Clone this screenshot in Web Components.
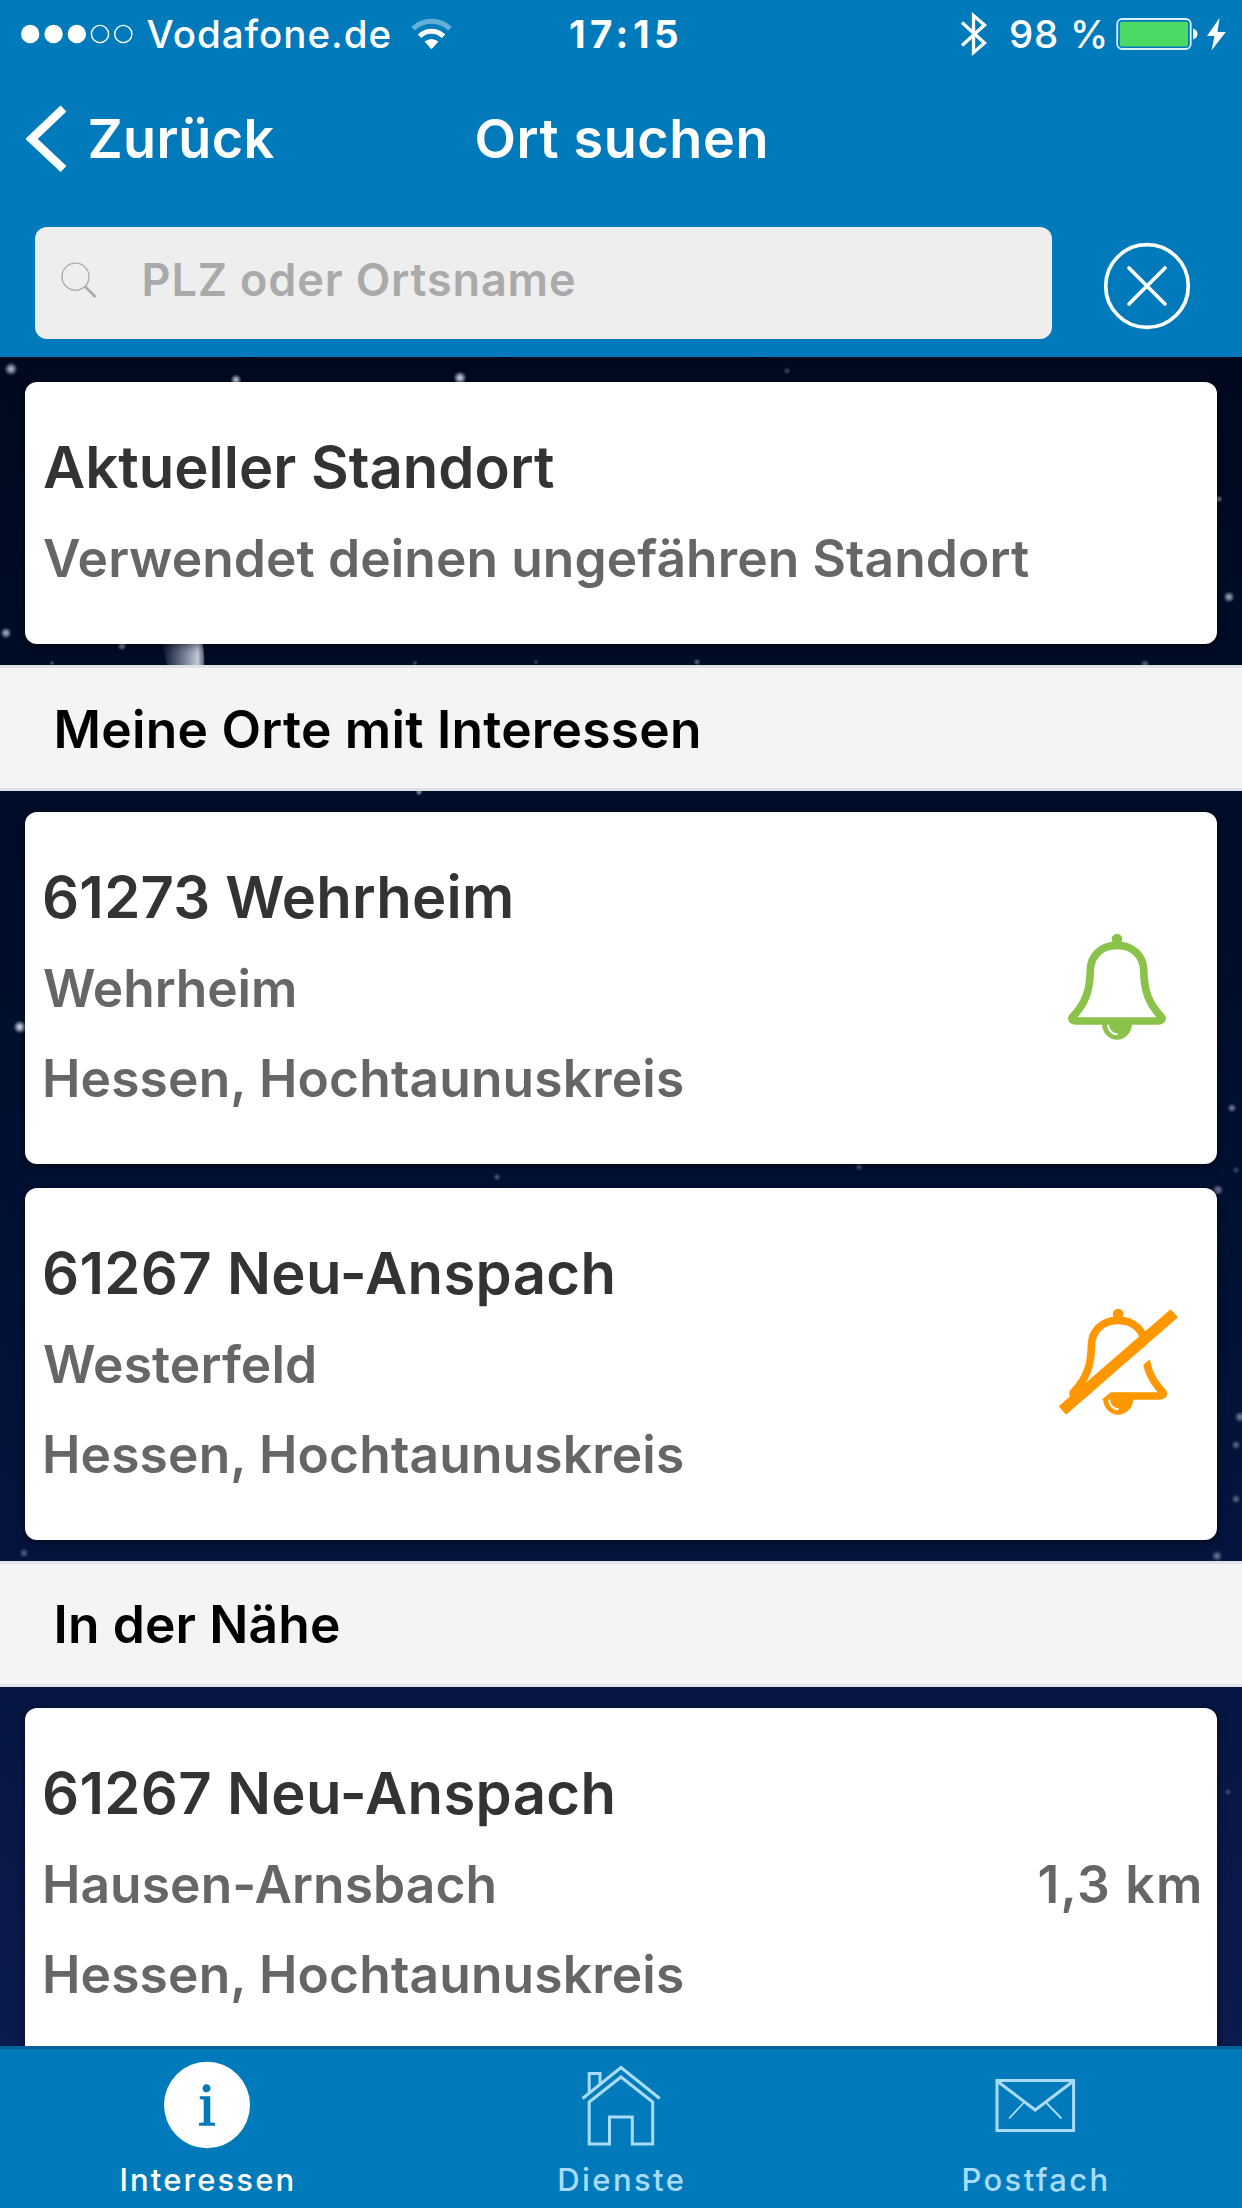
<!DOCTYPE html>
<html lang="de">
<head>
<meta charset="utf-8">
<title>Ort suchen</title>
<style>
html,body{margin:0;padding:0}
body{width:1242px;height:2208px;overflow:hidden;font-family:Inter,"Liberation Sans",sans-serif}
</style>
</head>
<body>
<place-app></place-app>
<script>
function define(name, html, setup) {
  const template = document.createElement('template');
  template.innerHTML = html;
  customElements.define(name, class extends HTMLElement {
    connectedCallback() {
      if (this.shadowRoot) return;
      this.attachShadow({ mode: 'open' }).appendChild(template.content.cloneNode(true));
      if (setup) setup(this, this.shadowRoot);
    }
  });
}

/* A single line of text, tracked so that its ink fills the given width. */
const ctx = document.createElement('canvas').getContext('2d');
const ruler = document.createElement('span');
ruler.style.cssText = 'position:absolute;visibility:hidden;white-space:pre;font-optical-sizing:none;letter-spacing:.001px';
define('fit-text', `
<style>
:host{display:block;white-space:nowrap;flex:none}
span{display:block;font-optical-sizing:none}
</style><span><slot></slot></span>`, (host, root) => {
  const text = host.textContent, size = +host.getAttribute('size');
  const weight = host.getAttribute('weight') || '500', width = +host.getAttribute('width');
  ctx.font = `${weight} ${size}px Inter`;
  const m = ctx.measureText(text);
  ruler.style.font = `${weight} ${size}px Inter,"Liberation Sans",sans-serif`;
  ruler.style.fontOpticalSizing = 'none';
  ruler.textContent = text;
  document.body.appendChild(ruler);
  const advance = ruler.getBoundingClientRect().width;
  ruler.remove();
  const ink = advance + m.actualBoundingBoxLeft - (m.width - m.actualBoundingBoxRight);
  host.style.width = width + 'px';
  const span = root.querySelector('span');
  span.style.font = `${weight} ${size}px/${host.getAttribute('line') || size * 1.2}px Inter,"Liberation Sans",sans-serif`;
  span.style.fontOpticalSizing = 'none';
  span.style.letterSpacing = ((width - ink) / (text.length - 1)).toFixed(3) + 'px';
  span.style.marginLeft = m.actualBoundingBoxLeft.toFixed(2) + 'px';
});

define('status-bar', `
<style>
:host{display:flex;height:68px;align-items:center;color:#fff;box-sizing:border-box;padding:0 16px 0 20px}
div{display:flex;align-items:center}
.l{width:550px}.r{flex:1;justify-content:flex-end}
svg{display:block;flex:none}
</style>
<div class="l">
<svg width="114" height="20" viewBox="20 24 114 20"><g fill="#fff"><circle cx="30.2" cy="34" r="9.2"/><circle cx="53.6" cy="34" r="9.2"/><circle cx="76.8" cy="34" r="9.2"/></g><g fill="none" stroke="#fff" stroke-width="1.4"><circle cx="100" cy="34" r="8.6"/><circle cx="123.3" cy="34" r="8.6"/></g></svg>
<fit-text style="margin-left:12.500px" size="38.5" weight="550" width="243">Vodafone.de</fit-text>
<svg style="margin-left:21px" width="41" height="32" viewBox="411 17 41 32"><path d="M424.5 40.5Q431.500 35.500 438.500 40.500L431.500 48.300Z" fill="#fff"/><path d="M419.500 35.200A17 17 0 0 1 443.500 35.200" fill="none" stroke="#fff" stroke-width="5"/><path d="M413 27.600A27 27 0 0 1 450 27.600" fill="none" stroke="#62afd8" stroke-width="5"/></svg>
</div>
<fit-text size="38.5" weight="700" width="107">17:15</fit-text>
<div class="r">
<svg width="27" height="46" viewBox="960 11 27 46"><path d="M962 22.500L984.500 43L973.500 52.500V15.500L984.500 25L962 45.500" fill="none" stroke="#fff" stroke-width="3.300"/></svg>
<fit-text style="margin-left:24px" size="38.5" weight="550" width="94">98 %</fit-text>
<svg style="margin-left:11px" width="82" height="34" viewBox="1116 17 82 34"><rect x="1117.200" y="19" width="73.500" height="30" rx="5" fill="none" stroke="#d9f0ff" stroke-width="1.800"/><rect x="1119.800" y="21.700" width="68.200" height="24.700" rx="2" fill="#4cd964"/><path d="M1193 28.500Q1197.500 30 1197.500 34T1193 39.500Z" fill="#fff"/></svg>
<svg style="margin-left:8px" width="20" height="34" viewBox="1206 16 20 34"><path d="M1219.500 17L1207 35H1214.500L1211.500 49.500L1225.800 31H1217.500Z" fill="#fff"/></svg>
</div>`);

define('nav-header', `
<style>
:host{display:grid;grid-template-columns:1fr auto 1fr;height:142px;align-items:center;color:#fff;padding-top:1px;box-sizing:border-box}
a{display:flex;align-items:center;padding-left:26px}
svg{display:block;margin-right:23.500px;margin-top:-2px}
</style>
<a><svg width="41" height="68" viewBox="26 105 41 68"><path d="M63.500 108.500L31.500 138.800L63.500 169" fill="none" stroke="#fff" stroke-width="8.500"/></svg>
<fit-text size="54" weight="600" width="184">Zurück</fit-text></a>
<fit-text size="54" weight="600" width="289">Ort suchen</fit-text><span></span>`);

define('search-bar', `
<style>
:host{display:flex;align-items:flex-start;height:147px;box-sizing:border-box;padding:17px 0 0 35px}
.field{width:1016.5px;height:112px;box-sizing:border-box;border-radius:12px;background:#eee;display:flex;align-items:flex-start;padding:26px 0 0 26px;color:#aaa}
.clear{margin:15px 0 0 51.500px}
svg{display:block;flex:none}
</style>
<div class="field"><svg style="margin-top:9px" width="37" height="38" viewBox="61 262 37 38"><circle cx="75.500" cy="276.700" r="13.500" fill="none" stroke="#aaa" stroke-width="1.300"/><path d="M85 286.500L95.500 297" stroke="#aaa" stroke-width="2.600"/></svg>
<fit-text style="margin-left:46.500px" size="45" weight="600" line="54" width="429.500">PLZ oder Ortsname</fit-text></div>
<svg class="clear" width="88" height="88" viewBox="-44 -44 88 88"><g fill="none" stroke="#fff" stroke-width="3.700" stroke-linecap="round"><circle r="41.300"/><path d="M-18 -18L18 18M18 -18L-18 18"/></g></svg>`);

/* White card: title, details slot, trailing slot on the right. */
define('place-card', `
<style>
:host{display:flex;justify-content:space-between;box-sizing:border-box;margin:0 25px;height:351.500px;padding:38px 0 0 19px;border-radius:12px;background:#fff;color:#666;box-shadow:0 2px 8px rgba(0,0,0,.55);flex:none}
.t{display:flex;flex-direction:column}
.d{margin-top:-1.500px}
::slotted([slot=title]){color:#333}
</style>
<div class="t"><slot name="title"></slot><div class="d"><slot></slot></div></div><slot name="end"></slot>`);

define('section-title', `
<style>
:host{display:flex;align-items:center;box-sizing:border-box;height:126px;background:#f4f4f4;border:solid #dfe2e7;border-width:3px 0;padding-left:56.500px;padding-top:3px;color:#000;flex:none}
</style><slot></slot>`);

const bellShape = `
<circle cx="353" cy="176" r="16" fill="currentColor"/>
<path d="M353 195C300 195 274 232 273 268C272 332 258 370 218 412Q216 422 230 422H476Q490 422 488 412C448 370 434 332 433 268C432 232 406 195 353 195Z" fill="none" stroke="currentColor" stroke-width="23" stroke-linejoin="round"/>
<path d="M308 430A45 48 0 0 0 398 430Z" fill="currentColor"/>
<path d="M326 433A28 30 0 0 0 354 462" fill="none" stroke="#fff" stroke-width="6"/>`;
define('bell-icon', `
<style>:host{display:block;width:126.667px;height:120px;margin-right:34px}svg{display:block}</style>
<svg width="126.667" height="120" viewBox="170 140 380 360"></svg>`, (host, root) => {
  const muted = host.hasAttribute('muted');
  host.style.color = muted ? '#ff9800' : '#8bc34a';
  root.querySelector('svg').innerHTML = muted
    ? `<g transform="translate(3.500 0)">${bellShape}</g><path d="M536 186L200 478L180 540L536 241Z" fill="#fff"/><path d="M514 162L536 186L200 478L178 453Z" fill="currentColor"/>`
    : bellShape;
});

define('tab-item', `
<style>
:host{flex:1;display:flex;flex-direction:column;align-items:center;color:#a9dcfa}
:host([active]){color:#fff}
.i{height:112px}
</style>
<div class="i"><slot name="icon"></slot></div><slot></slot>`);

define('tab-bar', `
<style>
:host{display:flex;box-sizing:border-box;height:162px;background:#007aba;border-top:3px solid #006397;flex:none}
svg{display:block}
</style>
<tab-item active><svg slot="icon" style="margin-top:12px" width="88" height="88" viewBox="-44 -44 88 88"><ellipse rx="43" ry="43.300" fill="#fff"/><text x="0" y="19.500" text-anchor="middle" font-family="Liberation Serif,serif" font-size="61" fill="#007aba" stroke="#007aba" stroke-width="1.600">i</text></svg><fit-text size="31" weight="550" width="171">Interessen</fit-text></tab-item>
<tab-item><svg slot="icon" style="margin-top:15px" width="80" height="84" viewBox="581 2064 80 84"><g fill="none" stroke="currentColor" stroke-width="3"><path d="M582.500 2098.500L621 2067.500L659.700 2098.500"/><path d="M589.200 2092V2073.500H600V2084"/><path d="M589.200 2102L621 2077L652.700 2102V2144H632.300V2117H609.500V2144H589.200Z"/></g></svg><fit-text size="31" width="123.500">Dienste</fit-text></tab-item>
<tab-item><svg slot="icon" style="margin-top:29px" width="81" height="56" viewBox="995 2078 81 56"><g fill="none" stroke="currentColor"><path d="M997 2080.500H1073.600V2130.500H997Z" stroke-width="3"/><path d="M997 2081L1035.200 2110L1073.500 2081" stroke-width="3"/><path d="M1024 2102.500L1009 2118.500M1046 2102.500L1061.500 2118.500" stroke-width="1.800"/></g></svg><fit-text size="31" width="143">Postfach</fit-text></tab-item>`);

define('night-sky', `
<style>:host{display:block}svg{display:block}</style>
<svg width="1242" height="1689" viewBox="0 357 1242 1689">
<defs><radialGradient id="s"><stop offset="0" stop-color="#e4e9f5"/><stop offset=".4" stop-color="#c0c7da" stop-opacity=".8"/><stop offset="1" stop-color="#8490b4" stop-opacity="0"/></radialGradient>
<linearGradient id="m"><stop offset="0" stop-color="#9ba4bc" stop-opacity="0"/><stop offset=".5" stop-color="#9ba4bc" stop-opacity=".7"/><stop offset=".85" stop-color="#c3c9d8"/><stop offset="1" stop-color="#c3c9d8" stop-opacity=".4"/></linearGradient></defs>
<path d="M161 640H202Q205 655 204 670H168Z" fill="url(#m)"/><g id="stars" fill="url(#s)"></g></svg>`, (host, root) => {
  const stars = [[11,369,7,.8],[236,380,6,.9],[460,378,7,.95],[6,633,6,.75],[122,646,5,.6],[20,1027,7,1],[1229,597,6,.7],[1219,499,4,.5],[1232,1108,5,.5],[1236,1170,4,.25],[1218,1190,6,.5],[1240,1417,6,.5],[1236,1445,5,.4],[1236,1499,5,.4],[1217,1556,6,.45],[24,1553,5,.35],[497,1177,4,.35],[859,1167,4,.35],[419,792,4,.6],[52,663,3,.3],[415,663,3,.3],[536,662,3,.25],[697,662,4,.4],[1145,664,5,.4],[787,371,4,.25],[1228,1792,4,.25]];
  root.querySelector('#stars').innerHTML = stars.map(([x, y, r, o]) => `<circle cx="${x}" cy="${y}" r="${r}" opacity="${o}"/>`).join('');
});

define('place-app', `
<style>
:host{display:flex;flex-direction:column;width:1242px;height:2208px;overflow:hidden}
header{background:#007aba;height:357px;flex:none}
main{flex:1;min-height:0;overflow:hidden;position:relative;background:linear-gradient(#00091f,#000f2d 40%,#04143e 72%,#0c1b4e)}
night-sky{position:absolute;inset:0}
.list{position:relative;display:flex;flex-direction:column;padding-top:25px}
</style>
<header><status-bar></status-bar><nav-header></nav-header><search-bar></search-bar></header>
<main><night-sky></night-sky><div class="list">
<place-card style="height:262px"><fit-text slot="title" size="58" weight="600" line="94.5" width="510">Aktueller Standort</fit-text><fit-text size="51.5" line="90" weight="600" width="985">Verwendet deinen ungefähren Standort</fit-text></place-card>
<section-title style="margin:21px 0"><fit-text size="51.5" weight="600" width="642.500">Meine Orte mit Interessen</fit-text></section-title>
<place-card><fit-text slot="title" size="58" weight="600" line="94.5" width="467">61273 Wehrheim</fit-text><fit-text size="51.5" line="90" weight="600" width="250">Wehrheim</fit-text><fit-text style="margin-left:1px" size="51.5" line="90" weight="600" width="638">Hessen, Hochtaunuskreis</fit-text><bell-icon slot="end" style="margin-top:76.700px"></bell-icon></place-card>
<place-card style="margin-top:24.500px"><fit-text slot="title" size="58" weight="600" line="94.5" width="568.500">61267 Neu-Anspach</fit-text><fit-text size="51.5" line="90" weight="600" width="270">Westerfeld</fit-text><fit-text style="margin-left:1px" size="51.5" line="90" weight="600" width="638">Hessen, Hochtaunuskreis</fit-text><bell-icon muted slot="end" style="margin-top:76.400px"></bell-icon></place-card>
<section-title style="margin:21px 0 21.500px"><fit-text size="51.5" weight="600" width="282.500">In der Nähe</fit-text></section-title>
<place-card><fit-text slot="title" size="58" weight="600" line="94.5" width="568.500">61267 Neu-Anspach</fit-text><fit-text style="margin-left:1px" size="51.5" line="90" weight="600" width="449.500">Hausen-Arnsbach</fit-text><fit-text style="margin-left:1px" size="51.5" line="90" weight="600" width="638">Hessen, Hochtaunuskreis</fit-text><fit-text slot="end" style="margin:93px 18px 0 0" size="51.5" line="90" weight="600" width="159.500">1,3 km</fit-text></place-card>
</div></main>
<tab-bar></tab-bar>`);
</script>
</body>
</html>
